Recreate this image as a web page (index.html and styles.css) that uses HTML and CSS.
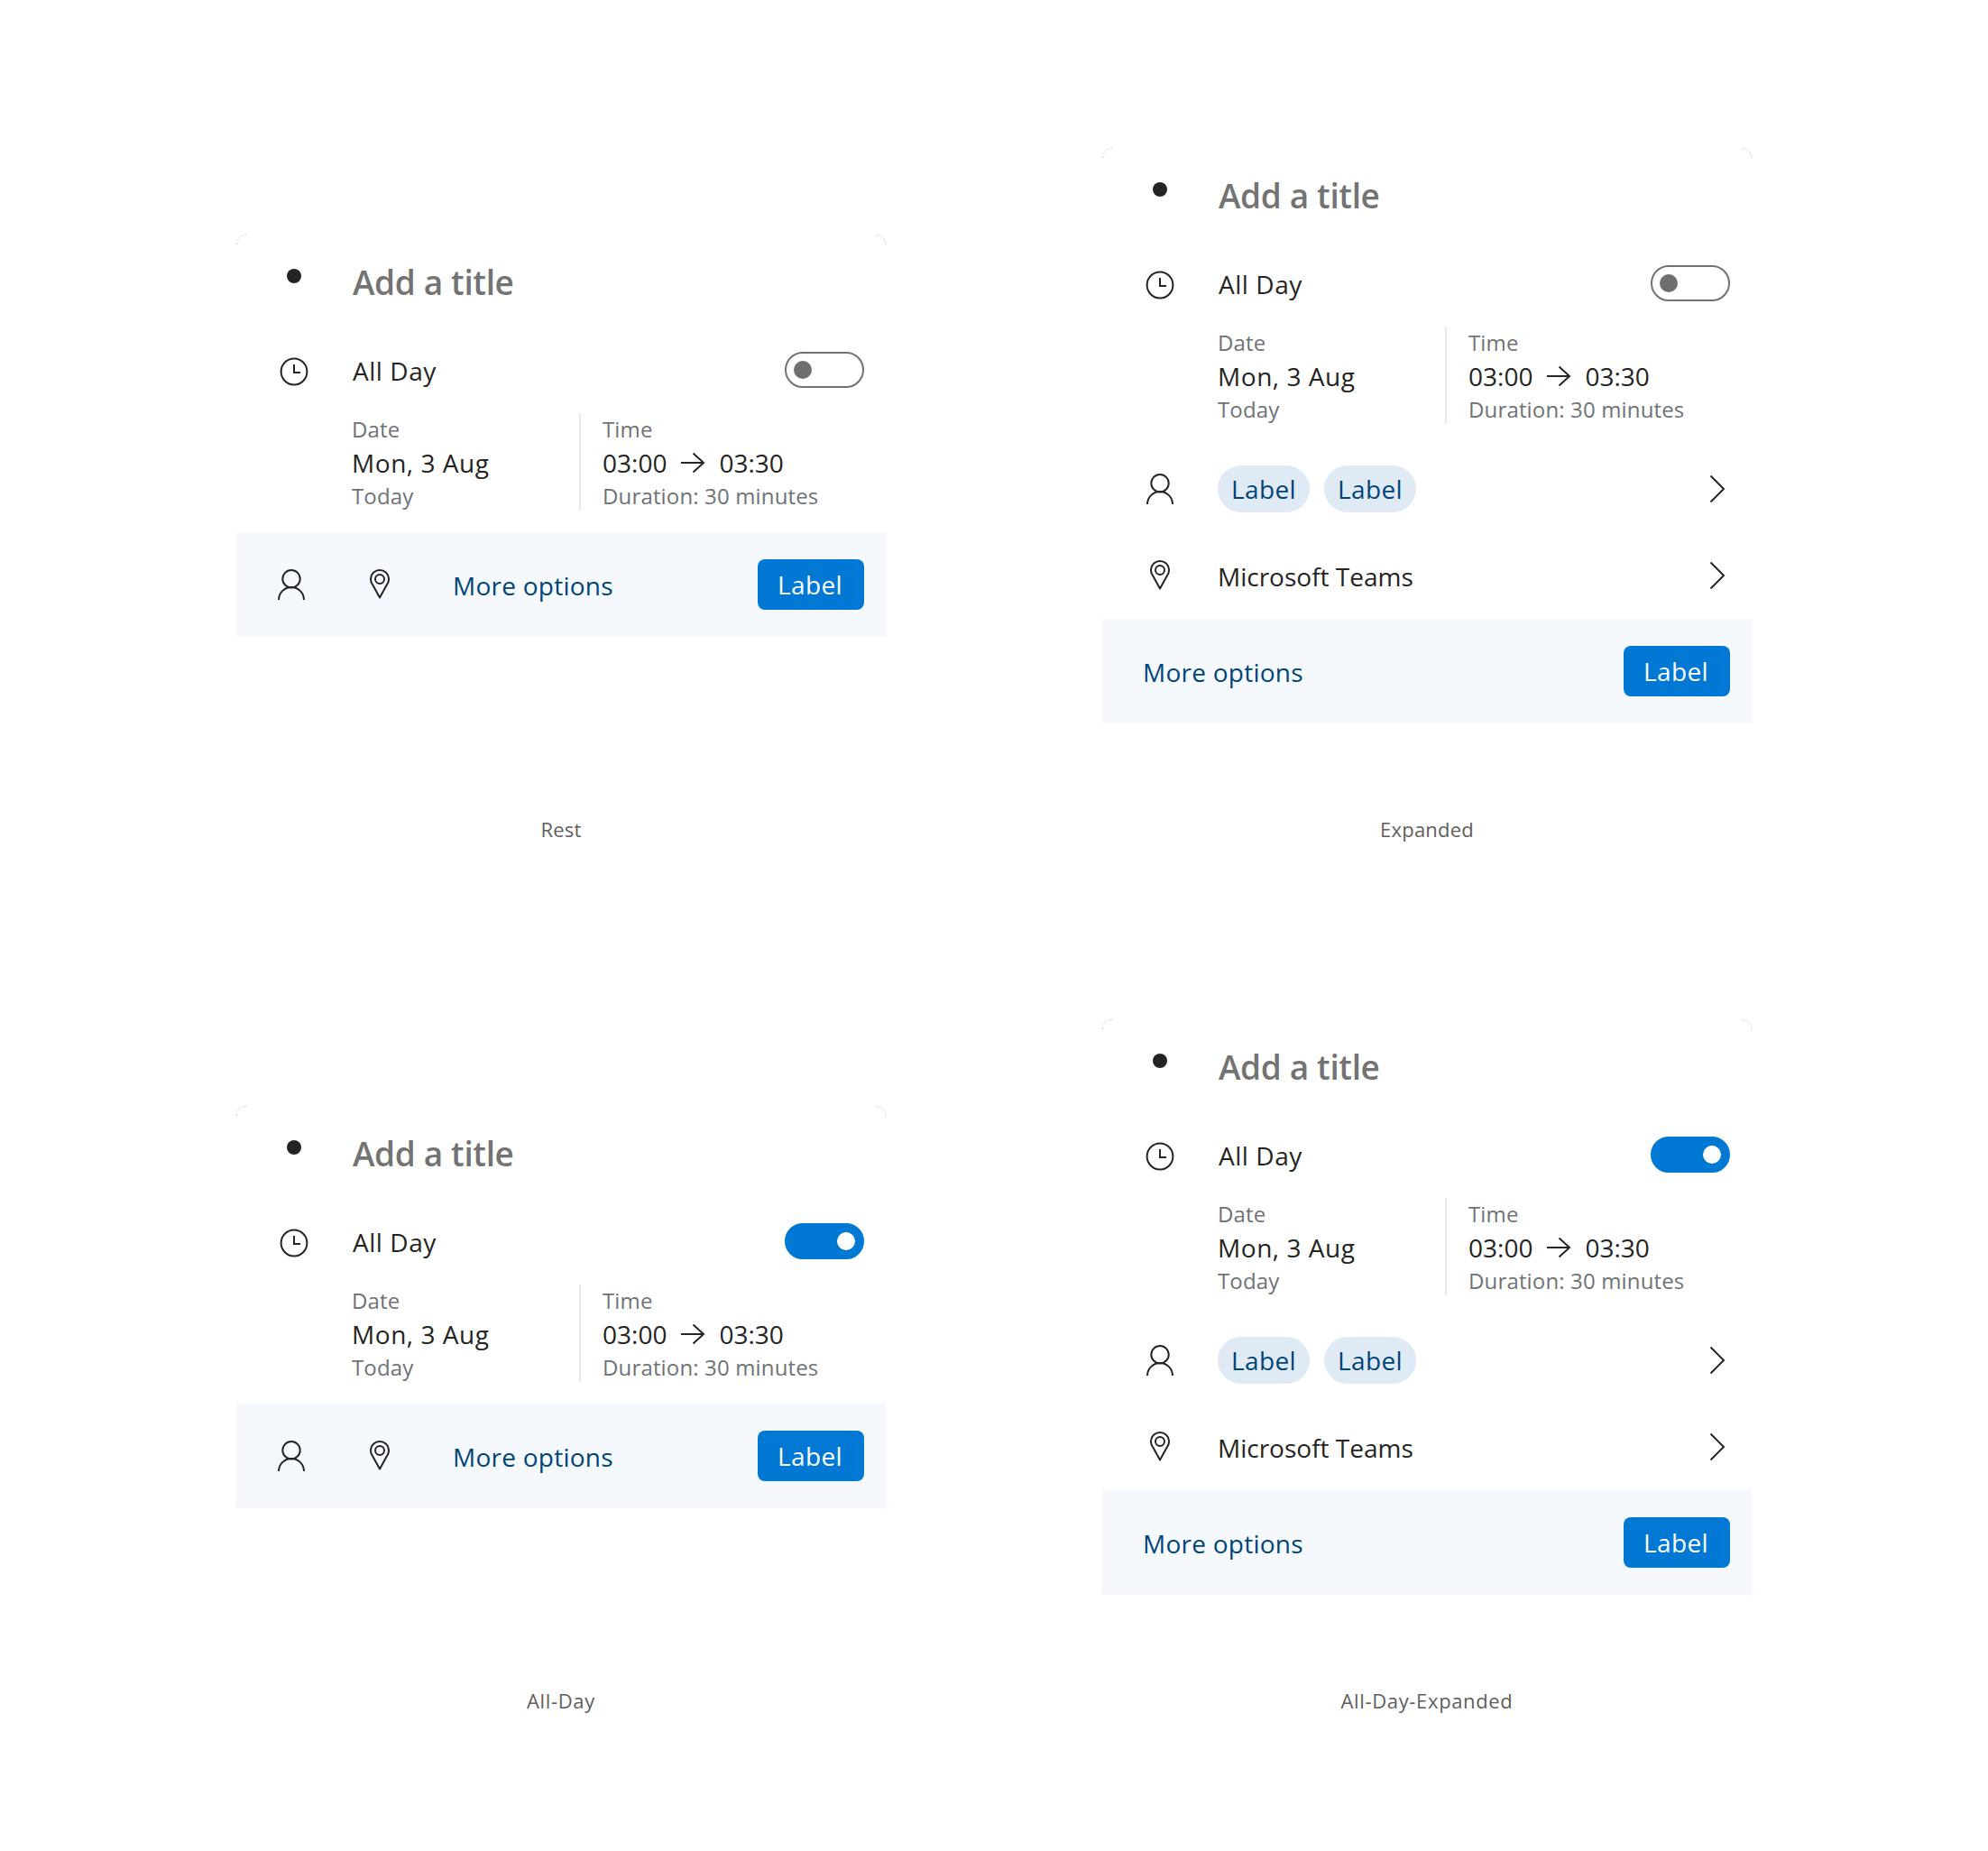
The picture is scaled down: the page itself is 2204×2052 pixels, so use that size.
FILE: index.html
```html
<!DOCTYPE html>
<html lang="en">
<head>
<meta charset="utf-8">
<title>Event card states</title>
<link rel="stylesheet" href="styles.css">
</head>
<body>
<svg class="defs" width="0" height="0" aria-hidden="true">
  <symbol id="i-clock" viewBox="0 0 32 32"><circle cx="16" cy="16" r="14.4" fill="none" stroke="currentColor" stroke-width="2"/><path d="M16 8v9h7" fill="none" stroke="currentColor" stroke-width="2"/></symbol>
  <symbol id="i-person" viewBox="0 0 30 34"><circle cx="15" cy="10.700" r="9.700" fill="none" stroke="currentColor" stroke-width="2"/><path d="M1 34a14 14 0 0 1 28 0" fill="none" stroke="currentColor" stroke-width="2"/></symbol>
  <symbol id="i-pin" viewBox="0 0 22 34"><path d="M11 31.500 3 17a10 10 0 1 1 16 0z" fill="none" stroke="currentColor" stroke-width="2" stroke-linejoin="round"/><circle cx="11" cy="11" r="5" fill="none" stroke="currentColor" stroke-width="2"/></symbol>
  <symbol id="i-chevron" viewBox="0 0 20 32"><path d="M2.500 1.500 17 16 2.500 30.500" fill="none" stroke="currentColor" stroke-width="2"/></symbol>
  <symbol id="i-arrow" viewBox="0 0 28 24"><path d="M1 12h25M14.500 1.500 26 12 14.500 22.500" fill="none" stroke="currentColor" stroke-width="2"/></symbol>
</svg>
<main class="board">

  <section class="cell">
    <div class="stage">
      <article class="card">
        <div class="row title-row"><span class="gutter"><span class="dot"></span></span><h2 class="title">Add a title</h2></div>
        <div class="row allday-row"><span class="gutter"><svg class="ic ic-clock"><use href="#i-clock"/></svg></span><span class="text wide">All Day</span><span class="toggle"></span></div>
        <div class="details">
          <div class="col"><div class="muted">Date</div><div class="value wide">Mon, 3 Aug</div><div class="muted">Today</div></div>
          <div class="col col-time"><div class="muted">Time</div><div class="value">03:00<svg class="ic-arrow"><use href="#i-arrow"/></svg>03:30</div><div class="muted">Duration: 30 minutes</div></div>
        </div>
        <div class="footer footer-icons">
          <svg class="ic ic-person"><use href="#i-person"/></svg>
          <svg class="ic ic-pin"><use href="#i-pin"/></svg>
          <span class="more">More options</span>
          <button class="primary">Label</button>
        </div>
      </article>
    </div>
    <p class="caption">Rest</p>
  </section>

  <section class="cell">
    <div class="stage">
      <article class="card">
        <div class="row title-row"><span class="gutter"><span class="dot"></span></span><h2 class="title">Add a title</h2></div>
        <div class="row allday-row"><span class="gutter"><svg class="ic ic-clock"><use href="#i-clock"/></svg></span><span class="text wide">All Day</span><span class="toggle"></span></div>
        <div class="details">
          <div class="col"><div class="muted">Date</div><div class="value wide">Mon, 3 Aug</div><div class="muted">Today</div></div>
          <div class="col col-time"><div class="muted">Time</div><div class="value">03:00<svg class="ic-arrow"><use href="#i-arrow"/></svg>03:30</div><div class="muted">Duration: 30 minutes</div></div>
        </div>
        <div class="row list-row first"><span class="gutter"><svg class="ic ic-person"><use href="#i-person"/></svg></span><span class="chips"><span class="chip">Label</span><span class="chip">Label</span></span><svg class="chev"><use href="#i-chevron"/></svg></div>
        <div class="row list-row"><span class="gutter"><svg class="ic ic-pin"><use href="#i-pin"/></svg></span><span class="text">Microsoft Teams</span><svg class="chev"><use href="#i-chevron"/></svg></div>
        <div class="footer footer-plain">
          <span class="more">More options</span>
          <button class="primary">Label</button>
        </div>
      </article>
    </div>
    <p class="caption">Expanded</p>
  </section>

  <section class="cell">
    <div class="stage">
      <article class="card">
        <div class="row title-row"><span class="gutter"><span class="dot"></span></span><h2 class="title">Add a title</h2></div>
        <div class="row allday-row"><span class="gutter"><svg class="ic ic-clock"><use href="#i-clock"/></svg></span><span class="text wide">All Day</span><span class="toggle on"></span></div>
        <div class="details">
          <div class="col"><div class="muted">Date</div><div class="value wide">Mon, 3 Aug</div><div class="muted">Today</div></div>
          <div class="col col-time"><div class="muted">Time</div><div class="value">03:00<svg class="ic-arrow"><use href="#i-arrow"/></svg>03:30</div><div class="muted">Duration: 30 minutes</div></div>
        </div>
        <div class="footer footer-icons">
          <svg class="ic ic-person"><use href="#i-person"/></svg>
          <svg class="ic ic-pin"><use href="#i-pin"/></svg>
          <span class="more">More options</span>
          <button class="primary">Label</button>
        </div>
      </article>
    </div>
    <p class="caption dashed">All-Day</p>
  </section>

  <section class="cell">
    <div class="stage">
      <article class="card">
        <div class="row title-row"><span class="gutter"><span class="dot"></span></span><h2 class="title">Add a title</h2></div>
        <div class="row allday-row"><span class="gutter"><svg class="ic ic-clock"><use href="#i-clock"/></svg></span><span class="text wide">All Day</span><span class="toggle on"></span></div>
        <div class="details">
          <div class="col"><div class="muted">Date</div><div class="value wide">Mon, 3 Aug</div><div class="muted">Today</div></div>
          <div class="col col-time"><div class="muted">Time</div><div class="value">03:00<svg class="ic-arrow"><use href="#i-arrow"/></svg>03:30</div><div class="muted">Duration: 30 minutes</div></div>
        </div>
        <div class="row list-row first"><span class="gutter"><svg class="ic ic-person"><use href="#i-person"/></svg></span><span class="chips"><span class="chip">Label</span><span class="chip">Label</span></span><svg class="chev"><use href="#i-chevron"/></svg></div>
        <div class="row list-row"><span class="gutter"><svg class="ic ic-pin"><use href="#i-pin"/></svg></span><span class="text">Microsoft Teams</span><svg class="chev"><use href="#i-chevron"/></svg></div>
        <div class="footer footer-plain">
          <span class="more">More options</span>
          <button class="primary">Label</button>
        </div>
      </article>
    </div>
    <p class="caption dashed">All-Day-Expanded</p>
  </section>

</main>
</body>
</html>
```
FILE: styles.css
```css
* { box-sizing: border-box; }
html, body { margin: 0; background: #fff; }
body { width: 2204px; height: 2052px; overflow: hidden; font-family: "Open Sans", "Noto Sans", sans-serif; color: #252423; }
.defs { position: absolute; }
.board { display: grid; grid-template-columns: 960px 960px; grid-auto-rows: 966px; padding: 54px 142px 0; }
.cell { display: flex; flex-direction: column; align-items: center; width: 960px; }
.stage { height: 856px; display: flex; align-items: center; }
.caption { margin: 0; font-size: 22px; line-height: 18px; color: #605e5c; letter-spacing: 0.2px; }
.caption.dashed { letter-spacing: 0.65px; }
.card { position: relative; width: 720px; background: #fff; }
.card::before, .card::after { content: ""; position: absolute; top: 2px; width: 10px; height: 10px; border-top: 1px dotted #ccc; }
.card::before { left: 0; border-left: 1px dotted #ccc; border-top-left-radius: 10px; }
.card::after { right: 0; border-right: 1px dotted #ccc; border-top-right-radius: 10px; }
.row { display: flex; align-items: center; }
.gutter { width: 128px; display: flex; justify-content: center; flex: none; }
.title-row { height: 110px; }
.title-row .gutter { margin-bottom: 14px; }
.dot { width: 16px; height: 16px; border-radius: 50%; background: #252423; }
.title { margin: 0 0 0 1px; font-size: 37px; line-height: 48px; font-weight: 600; color: #737373; letter-spacing: -0.35px; }
.allday-row { height: 90px; padding-right: 24px; }
.allday-row .text { margin-bottom: 4px; padding-left: 1px; }
.ic { display: block; color: #252423; flex: none; }
.ic-clock { width: 32px; height: 32px; margin-bottom: 2px; }
.ic-person { width: 30px; height: 34px; }
.ic-pin { width: 22px; height: 34px; }
.text { font-size: 28px; line-height: 36px; flex: 1; }
.wide { letter-spacing: 0.55px; }
.toggle { position: relative; width: 88px; height: 40px; border: 2px solid #737373; border-radius: 20px; margin-bottom: 6px; background: #fff; }
.toggle::after { content: ""; position: absolute; left: 8px; top: 8px; width: 20px; height: 20px; border-radius: 50%; background: #6e6e6e; }
.toggle.on { background: #0078d4; border-color: #0078d4; }
.toggle.on::after { left: auto; right: 8px; background: #fff; }
.details { display: flex; margin-left: 128px; height: 108px; }
.col { width: 252px; }
.col-time { border-left: 2px solid #deecf9; padding-left: 24px; width: 340px; }
.muted { font-size: 24px; line-height: 36px; color: #6f7276; letter-spacing: 0.15px; white-space: nowrap; }
.value { font-size: 28px; line-height: 38px; display: flex; align-items: center; white-space: nowrap; }
.ic-arrow { width: 28px; height: 24px; margin: 0 15px; color: #252423; }
.footer { display: flex; align-items: center; height: 116px; margin-top: 24px; background: #f5f9fd; padding-right: 24px; }
.footer-icons { padding-left: 46px; }
.footer-icons .ic-person { margin-right: 72px; }
.footer-icons .ic-pin { margin-right: 70px; }
.footer-plain { padding-left: 45px; margin-top: 0; }
.more { flex: 1; font-size: 28px; line-height: 36px; color: #004578; letter-spacing: 0.25px; margin-top: 2px; }
.primary { width: 118px; height: 56px; border: 0; border-radius: 8px; background: #0078d4; color: #fff; font: inherit; font-size: 28px; letter-spacing: 0.4px; padding: 0 2px 0 0; }
.list-row { height: 96px; padding-right: 28px; }
.list-row.first { margin-top: 24px; }
.list-row .text { margin-top: 2px; }
.chips { display: flex; gap: 16px; flex: 1; }
.chip { width: 102px; height: 52px; border-radius: 26px; background: #e0eaf5; color: #004578; font-size: 28px; line-height: 52px; text-align: center; letter-spacing: 0.4px; }
.chev { width: 20px; height: 32px; color: #252423; }
```
